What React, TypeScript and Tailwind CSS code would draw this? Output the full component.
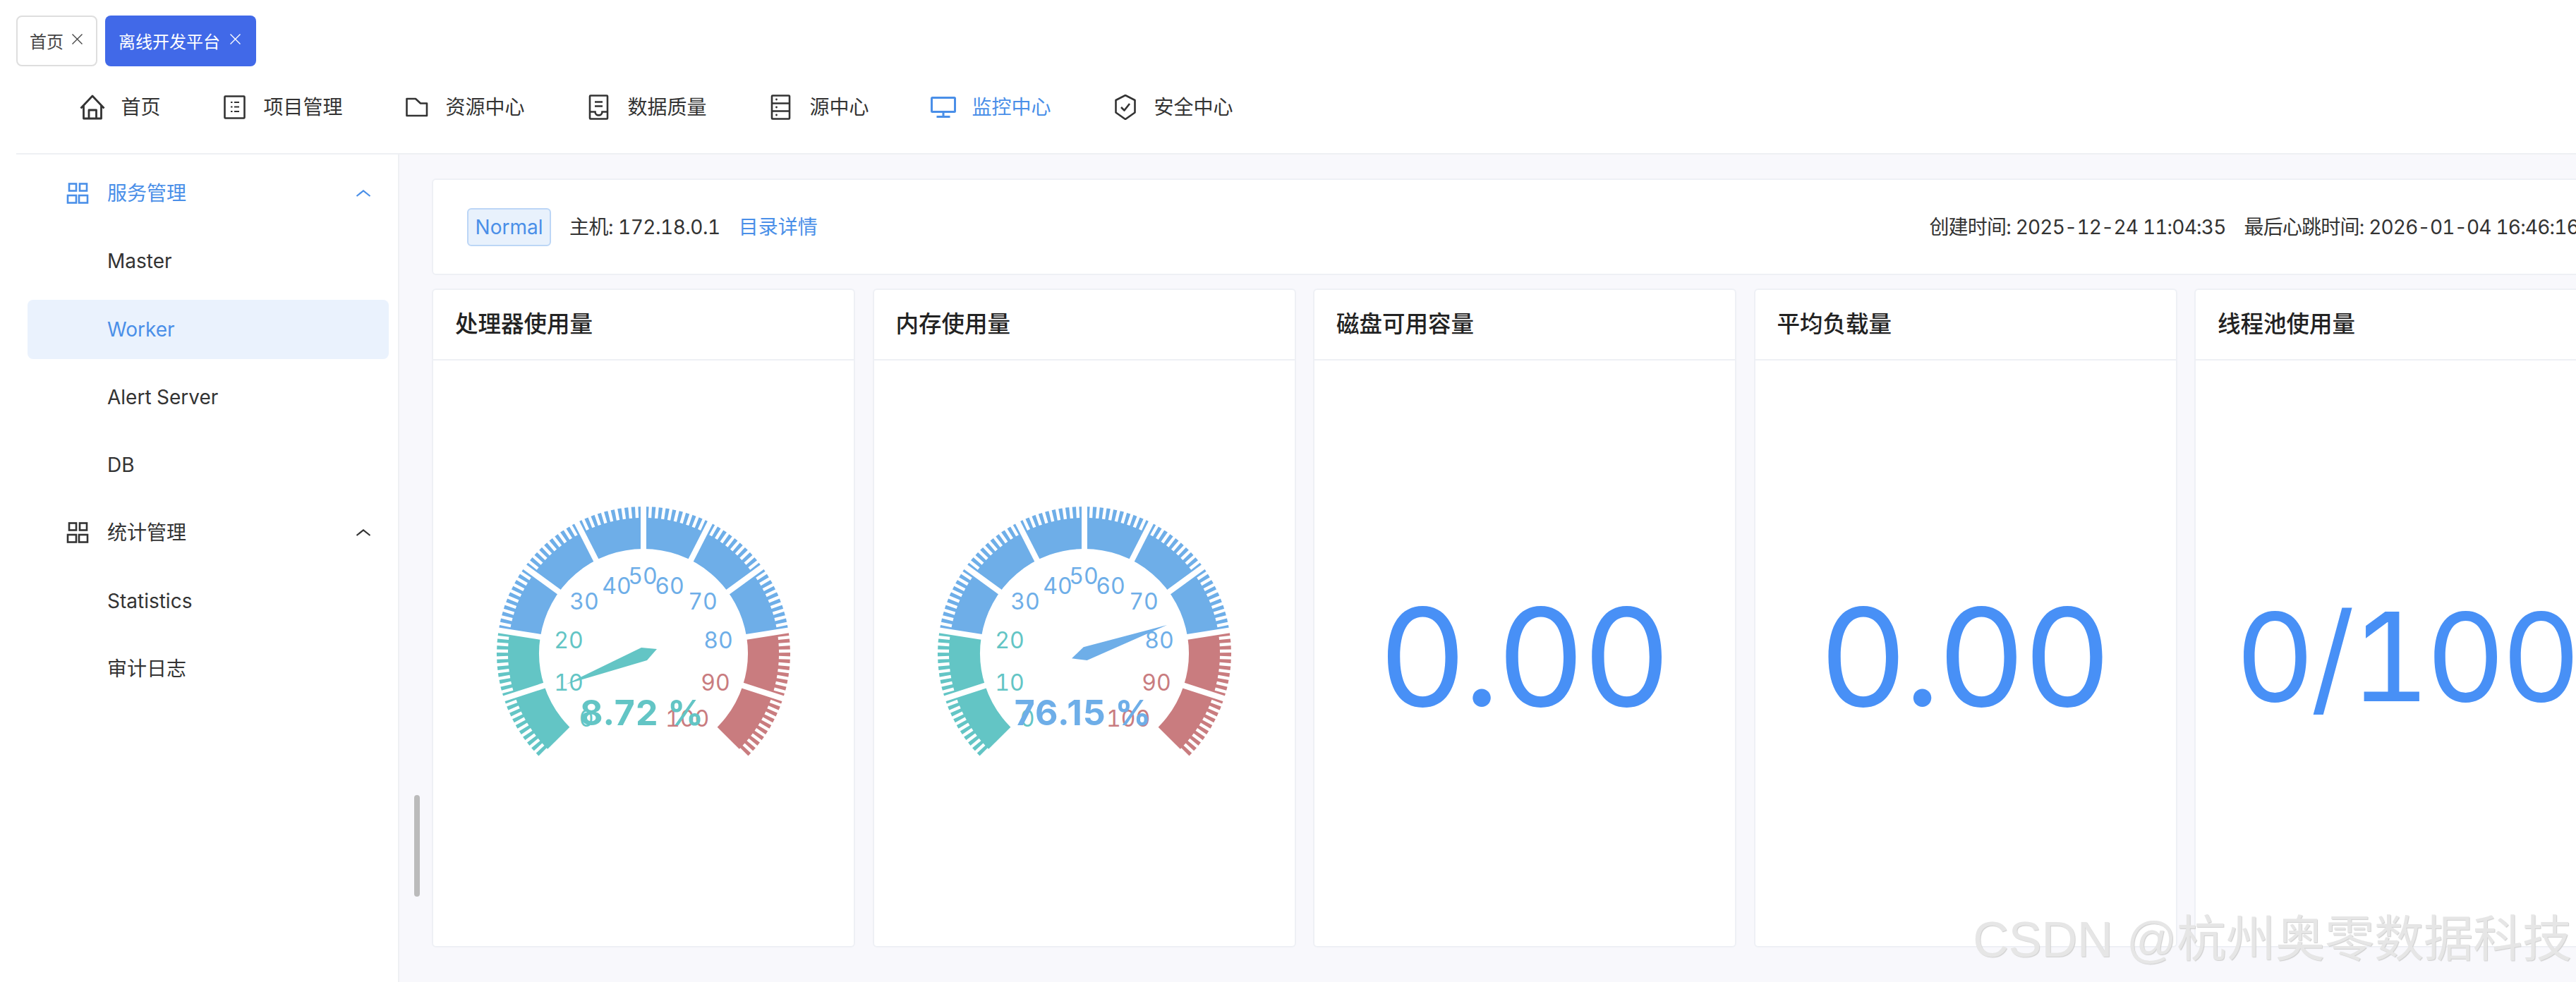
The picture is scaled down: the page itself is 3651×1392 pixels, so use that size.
import type { ReactNode } from "react";

const FONT = "font-['Inter','Noto_Sans_CJK_SC',sans-serif]";

const TEAL = "#63c5c5";
const BLUE = "#6eaee8";
const RED = "#c97c7f";

function HomeIcon() {
  return (
    <svg width="36" height="36" viewBox="0 0 36 36" fill="none" stroke="currentColor" strokeWidth="2.8" strokeLinejoin="round">
      <path d="M1.5 19.5 L18 2 L34.5 19.5 M5.5 16 V34 H30.5 V16 M13 34 V22 H23.5 V34" />
    </svg>
  );
}

function ListIcon() {
  return (
    <svg width="36" height="36" viewBox="0 0 36 36" fill="none" stroke="currentColor" strokeWidth="2.6">
      <rect x="3.5" y="2.5" width="28" height="31" rx="1" />
      <path d="M12 11 H14.5 M12 17.5 H14.5 M12 24 H14.5 M17 11 H24 M17 17.5 H24 M17 24 H24" strokeWidth="2" />
    </svg>
  );
}

function FolderIcon() {
  return (
    <svg width="36" height="36" viewBox="0 0 36 36" fill="none" stroke="currentColor" strokeWidth="2.6" strokeLinejoin="round">
      <path d="M3.5 6 H16 L23 12.5 H32 V30 H3.5 Z" />
    </svg>
  );
}

function DocIcon() {
  return (
    <svg width="36" height="36" viewBox="0 0 36 36" fill="none" stroke="currentColor" strokeWidth="2.6">
      <rect x="5" y="1.5" width="25" height="33" rx="1" />
      <path d="M12 10.5 H23 M12 16.5 H23" />
      <path d="M5 24.5 H12.5 C12.5 31 22.5 31 22.5 24.5 H30" />
    </svg>
  );
}

function ServerIcon() {
  return (
    <svg width="36" height="36" viewBox="0 0 36 36" fill="none" stroke="currentColor" strokeWidth="2.6">
      <rect x="5" y="1.5" width="25" height="33" rx="1" />
      <path d="M5 12.5 H30 M5 23.5 H30" />
      <circle cx="11.5" cy="7" r="1.4" fill="currentColor" stroke="none" />
      <circle cx="11.5" cy="18" r="1.4" fill="currentColor" stroke="none" />
      <circle cx="11.5" cy="29" r="1.4" fill="currentColor" stroke="none" />
    </svg>
  );
}

function MonitorIcon() {
  return (
    <svg width="36" height="36" viewBox="0 0 36 36" fill="none" stroke="currentColor" strokeWidth="3">
      <rect x="1.5" y="4.5" width="33" height="20" rx="1" />
      <path d="M18 24.5 V31.5 M8.5 31.5 H27.5" />
    </svg>
  );
}

function ShieldIcon() {
  return (
    <svg width="36" height="36" viewBox="0 0 36 36" fill="none" stroke="currentColor" strokeWidth="2.6" strokeLinejoin="round">
      <path d="M18 1 L31.5 8 V25.5 L18 35 L4.5 25.5 V8 Z" />
      <path d="M12 18 L16.5 22.5 L24 13" />
    </svg>
  );
}

function GridIcon() {
  return (
    <svg width="32" height="32" viewBox="0 0 32 32" fill="none" stroke="currentColor" strokeWidth="2.6">
      <rect x="4" y="2.5" width="10" height="10" />
      <rect x="19" y="2.5" width="10" height="10" />
      <rect x="2" y="19" width="12" height="10.5" />
      <rect x="18" y="19" width="12" height="10.5" />
    </svg>
  );
}

function ChevronUp() {
  return (
    <svg width="22" height="12" viewBox="0 0 22 12" fill="none" stroke="currentColor" strokeWidth="2.2">
      <path d="M1.5 10 L11 2.5 L20.5 10" />
    </svg>
  );
}

function CloseIcon() {
  return (
    <svg width="15" height="15" viewBox="0 0 15 15" stroke="currentColor" strokeWidth="1.4" className="-mt-[10px]">
      <path d="M0.5 0.5 L14.5 14.5 M14.5 0.5 L0.5 14.5" />
    </svg>
  );
}

const navItems: { label: string; icon: ReactNode; active?: boolean }[] = [
  { label: "首页", icon: <HomeIcon /> },
  { label: "项目管理", icon: <ListIcon /> },
  { label: "资源中心", icon: <FolderIcon /> },
  { label: "数据质量", icon: <DocIcon /> },
  { label: "源中心", icon: <ServerIcon /> },
  { label: "监控中心", icon: <MonitorIcon />, active: true },
  { label: "安全中心", icon: <ShieldIcon /> },
];

const sideRows = [
  { label: "服务管理", group: true, active: true },
  { label: "Master" },
  { label: "Worker", selected: true },
  { label: "Alert Server" },
  { label: "DB" },
  { label: "统计管理", group: true },
  { label: "Statistics" },
  { label: "审计日志" },
];

// label positions measured from the gauge centre
const gaugeLabels: { t: string; x: number; y: number; c: string }[] = [
  { t: "0", x: -81, y: 92, c: TEAL },
  { t: "10", x: -106, y: 41, c: TEAL },
  { t: "20", x: -106, y: -19, c: TEAL },
  { t: "30", x: -84, y: -74, c: BLUE },
  { t: "40", x: -38, y: -96, c: BLUE },
  { t: "50", x: -1, y: -110, c: BLUE },
  { t: "60", x: 37, y: -96, c: BLUE },
  { t: "70", x: 84, y: -74, c: BLUE },
  { t: "80", x: 106, y: -19, c: BLUE },
  { t: "90", x: 102, y: 41, c: RED },
  { t: "100", x: 62, y: 92, c: RED },
];

const pt = (deg: number, r: number) => {
  const a = (deg * Math.PI) / 180;
  return [r * Math.cos(a), -r * Math.sin(a)];
};

const arc = (from: number, to: number, r: number) => {
  const [x1, y1] = pt(from, r);
  const [x2, y2] = pt(to, r);
  return `M${x1} ${y1} A${r} ${r} 0 ${from - to > 180 ? 1 : 0} 1 ${x2} ${y2}`;
};

function Gauge({ value, color, needle }: { value: string; color: string; needle: string }) {
  const ticks = Array.from({ length: 101 }, (_, i) => 225 - i * 2.7);
  const splits = Array.from({ length: 9 }, (_, i) => 198 - i * 27);
  return (
    <svg width="500" height="500" viewBox="-250 -250 500 500">
      <path d={arc(225, 171, 178)} fill="none" stroke={TEAL} strokeWidth="60" />
      <path d={arc(171, 9, 178)} fill="none" stroke={BLUE} strokeWidth="60" />
      <path d={arc(9, -45, 178)} fill="none" stroke={RED} strokeWidth="60" />
      {ticks.map((d) => {
        const [x1, y1] = pt(d, 192);
        const [x2, y2] = pt(d, 210);
        return <line key={d} x1={x1} y1={y1} x2={x2} y2={y2} stroke="#fff" strokeWidth="4.4" />;
      })}
      {splits.map((d) => {
        const [x1, y1] = pt(d, 146);
        const [x2, y2] = pt(d, 210);
        return <line key={d} x1={x1} y1={y1} x2={x2} y2={y2} stroke="#fff" strokeWidth="8" />;
      })}
      <polygon points={needle} fill={color} />
      {gaugeLabels.map((l) => (
        <text key={l.t} x={l.x} y={l.y} dy="0.36em" textAnchor="middle" fontSize="32" fill={l.c}>
          {l.t}
        </text>
      ))}
      <text x="-2" y="102" textAnchor="middle" fontSize="50" fontWeight="700" letterSpacing="1" fill={color} className="normal-nums">
        {value}
      </text>
    </svg>
  );
}

function Card({ title, children }: { title: string; children: ReactNode }) {
  return (
    <div className="w-[600px] shrink-0 h-[934px] flex flex-col bg-white border-2 border-[#eef0f5] rounded-md">
      <div className="h-[100px] shrink-0 flex items-center pl-[31px] border-b-2 border-[#eef0f5] text-[32.5px] font-medium text-[#222]">
        {title}
      </div>
      <div className="flex-1 flex items-center justify-center overflow-hidden">{children}</div>
    </div>
  );
}

export default function App() {
  return (
    <div className={`${FONT} tabular-nums relative w-[3651px] h-[1392px] overflow-hidden bg-white text-[#333]`}>
      <div className="h-[94px] pt-[22px] pl-[23px] flex gap-[11px]">
        <div className="h-[72px] w-[115px] flex items-center gap-[12px] pl-[17px] pt-[4px] border-2 border-[#dedede] rounded-lg text-[24px] text-[#444]">
          <span>首页</span>
          <CloseIcon />
        </div>
        <div className="h-[72px] w-[214px] flex items-center gap-[14px] pl-[19px] pt-[4px] bg-[#4169e8] rounded-lg text-[24px] text-white">
          <span>离线开发平台</span>
          <CloseIcon />
        </div>
      </div>

      <div className="ml-[23px] h-[125px] pb-[7px] border-b-2 border-[#eef0f3] flex items-center pl-[90px] gap-[87.5px] text-[28px]">
        {navItems.map((n) => (
          <div key={n.label} className={`flex items-center gap-[22.5px] ${n.active ? "text-[#4a8fe8]" : "text-[#333]"}`}>
            {n.icon}
            <span>{n.label}</span>
          </div>
        ))}
      </div>

      <div className="flex h-[1173px]">
        <div className="ml-[23px] w-[543px] shrink-0 border-r-2 border-[#eef0f3] pt-[13px] pl-[16px] pr-[13px] flex flex-col gap-[12.3px]">
          {sideRows.map((r) => (
            <div
              key={r.label}
              className={`h-[84px] shrink-0 flex items-center rounded-lg text-[28px] ${r.selected ? "bg-[#eaf2fd]" : ""} ${
                r.selected || r.active ? "text-[#4a8fe8]" : "text-[#333]"
              } ${r.group ? "pl-[55px]" : "pl-[113px]"}`}
            >
              {r.group && (
                <span className="mr-[26px]">
                  <GridIcon />
                </span>
              )}
              <span>{r.label}</span>
              {r.group && (
                <span className="ml-auto mr-[25px]">
                  <ChevronUp />
                </span>
              )}
            </div>
          ))}
        </div>

        <div className="flex-1 overflow-hidden bg-[#f8f8fc] pl-[46px] pt-[34px]">
          <div className="w-[3099px] flex flex-col gap-[19px]">
            <div className="h-[137px] flex items-center pl-[48px] pr-[54px] bg-white border-2 border-[#eef0f5] rounded-md text-[28px]">
              <span className="h-[54px] w-[119px] flex items-center justify-center rounded-md bg-[#e8f1fc] border-2 border-[#bcd6f6] text-[#4a8fe8]">
                Normal
              </span>
              <span className="ml-[26px] tracking-[-0.5px]">主机: 172.18.0.1</span>
              <span className="ml-[26px] text-[#4a8fe8]">目录详情</span>
              <span className="ml-auto tracking-[-0.8px]">创建时间: 2025-12-24 11:04:35</span>
              <span className="ml-[26px] tracking-[-0.8px]">最后心跳时间: 2026-01-04 16:46:16</span>
            </div>
            <div className="flex gap-[24.5px]">
              <Card title="处理器使用量">
                <Gauge value="8.72 %" color={TEAL} needle="-110,44 -3,-8 19,-6 5,10" />
              </Card>
              <Card title="内存使用量">
                <Gauge value="76.15 %" color={BLUE} needle="117,-40 -1.3,-8.7 -18,7.3 3.7,10" />
              </Card>
              <Card title="磁盘可用容量">
                <span className="text-[193px] leading-none normal-nums text-[#4890f6] pt-[10px]">0.00</span>
              </Card>
              <Card title="平均负载量">
                <span className="text-[193px] leading-none normal-nums text-[#4890f6] pt-[10px]">0.00</span>
              </Card>
              <Card title="线程池使用量">
                <span className="text-[174px] leading-none tracking-[-6px] text-[#4890f6] pt-[10px]">0/100</span>
              </Card>
            </div>
          </div>
        </div>
      </div>

      <div className="absolute left-[587px] top-[1127px] w-[8px] h-[144px] rounded-full bg-[#bbbbbb]" />

      <div className="absolute right-[6px] top-[1290px] text-[70px] leading-[84px] whitespace-nowrap text-[#e6e6e6] font-['Liberation_Sans','Noto_Sans_CJK_SC',sans-serif] [text-shadow:1px_1px_1px_#cfcfcf]">
        CSDN @杭州奥零数据科技
      </div>
    </div>
  );
}
